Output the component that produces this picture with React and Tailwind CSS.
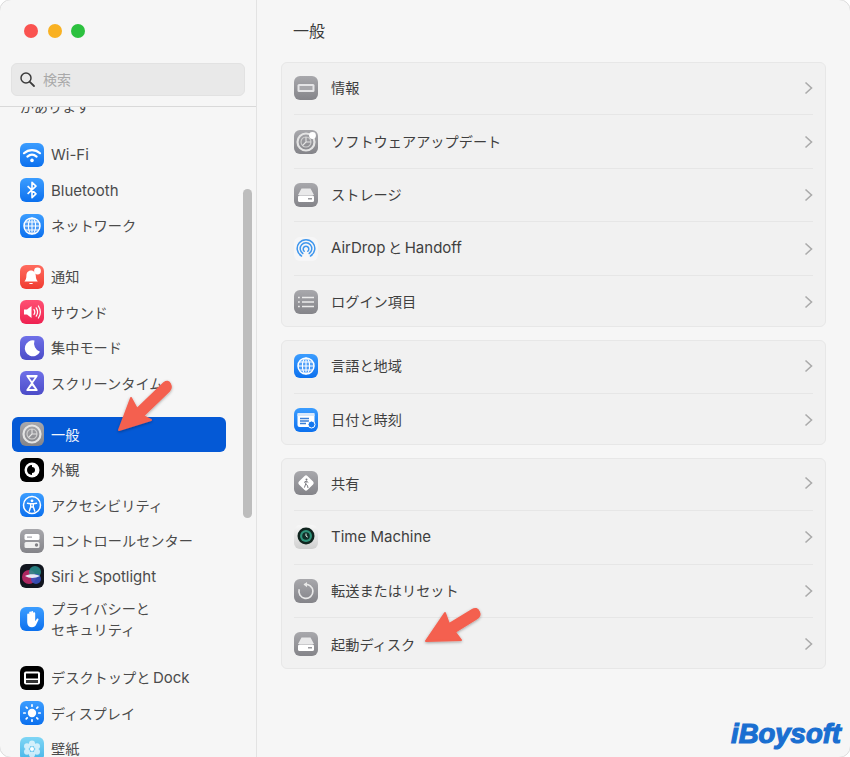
import React from 'react';

const GRAY = 'bg-linear-to-b from-[#a8a8ac] to-[#848489]';
const BLUE = 'bg-linear-to-b from-[#3b9dff] to-[#0a70ee]';

const Tile = ({ bg, children }) => (
  <div className={`w-[24px] h-[24px] shrink-0 rounded-[6px] overflow-hidden ${bg}`}>
    <svg viewBox="0 0 24 24" className="w-full h-full block">{children}</svg>
  </div>
);

const Gear = ({ badge }) => (
  <>
    <circle cx="12" cy="12" r="8.5" fill="none" stroke="#e4e4e4" strokeWidth="2.2" />
    <circle cx="12" cy="12" r="5" fill="none" stroke="#d0d0d0" strokeWidth="1.1" />
    <path d="M12 12 L12 7 M12 12 L17 12 M12 12 L8.5 15.5" stroke="#e4e4e4" strokeWidth="1.1" />
    {badge && <circle cx="18.5" cy="5.5" r="3.4" fill="#fff" />}
  </>
);

const Globe = () => (
  <g fill="none" stroke="#fff" strokeWidth="1.1">
    <circle cx="12" cy="12" r="8" fill="#ffffff30" strokeWidth="1.5" />
    <ellipse cx="12" cy="12" rx="3.6" ry="8" />
    <path d="M4 12h16M5.2 8h13.6M5.2 16h13.6M12 4v16" />
  </g>
);

const Drive = () => (
  <>
    <path d="M7.5 5.5h9l3.5 6.5H4z" fill="#e9e9ea" />
    <rect x="4" y="12.5" width="16" height="6.5" rx="1.6" fill="#fff" />
    <rect x="14" y="15" width="4" height="1.5" fill="#9a9a9e" />
  </>
);

const icons = {
  wifi: (
    <Tile bg={BLUE}>
      <g fill="none" stroke="#fff" strokeWidth="2.2" strokeLinecap="round">
        <path d="M4 10.2c4.7-4.2 11.3-4.2 16 0" />
        <path d="M7.4 13.6c2.8-2.4 6.4-2.4 9.2 0" />
      </g>
      <circle cx="12" cy="17.4" r="1.8" fill="#fff" />
    </Tile>
  ),
  bluetooth: (
    <Tile bg={BLUE}>
      <path d="M7.6 8.2l8.4 7.6-4 3.8V4.4l4 3.8-8.4 7.6" fill="none" stroke="#fff" strokeWidth="1.6" strokeLinejoin="round" />
    </Tile>
  ),
  network: <Tile bg={BLUE}><Globe /></Tile>,
  bell: (
    <Tile bg="bg-linear-to-b from-[#ff6b5e] to-[#f03a30]">
      <path d="M11 5.5c-3 0-4.6 2.3-4.6 5.2 0 3-1 4.6-2 5.8h13.4c-1-1.2-2-2.8-2-5.8 0-2.9-1.8-5.2-4.8-5.2z" fill="#fff" />
      <path d="M9 18h4c0 1.4-4 1.4-4 0z" fill="#fff" />
      <circle cx="17.5" cy="6" r="3.4" fill="#fff" />
    </Tile>
  ),
  sound: (
    <Tile bg="bg-linear-to-b from-[#ff4f73] to-[#ee1f50]">
      <path d="M4 9.5h3l4.5-3.6v12.2L7 14.5H4z" fill="#fff" />
      <g fill="none" stroke="#fff" strokeWidth="1.2" strokeLinecap="round">
        <path d="M14 9.5c1 1.5 1 3.5 0 5" />
        <path d="M16.2 7.8c1.7 2.6 1.7 5.8 0 8.4" />
        <path d="M18.4 6c2.4 3.6 2.4 8.4 0 12" />
      </g>
    </Tile>
  ),
  focus: (
    <Tile bg="bg-linear-to-b from-[#6f70e8] to-[#4c4cc8]">
      <path d="M14.5 4.5A8 8 0 1 0 20 15.8 9 9 0 0 1 14.5 4.5z" fill="#fff" />
    </Tile>
  ),
  hourglass: (
    <Tile bg="bg-linear-to-b from-[#6f70e8] to-[#4c4cc8]">
      <path d="M6.5 4h11v1.6L13 12l4.5 6.4V20h-11v-1.6L11 12 6.5 5.6z" fill="#fff" />
      <path d="M9.2 6.5h5.6L12 10.3zM9 18l3-3.400 3 3.400z" fill="#6060d8" />
    </Tile>
  ),
  general: <Tile bg={GRAY}><Gear /></Tile>,
  appearance: (
    <Tile bg="bg-black">
      <circle cx="12" cy="12" r="7.5" fill="#fff" />
      <path d="M12 7a5 5 0 0 0 0 10z" fill="#000" />
      <path d="M12 9a3 3 0 0 1 0 6z" fill="#000" />
    </Tile>
  ),
  access: (
    <Tile bg={BLUE}>
      <circle cx="12" cy="12" r="8.5" fill="none" stroke="#fff" strokeWidth="1.5" />
      <circle cx="12" cy="7.8" r="1.4" fill="#fff" />
      <path d="M7.5 10.2l3.2.6v3l-1.5 4.4M16.5 10.2l-3.2.6v3l1.5 4.4M10.7 10.8h2.6M10.7 14h2.6" fill="none" stroke="#fff" strokeWidth="1.4" strokeLinecap="round" />
    </Tile>
  ),
  control: (
    <Tile bg={GRAY}>
      <rect x="4.5" y="5" width="15" height="6" rx="1.5" fill="#fff" />
      <rect x="4.5" y="13" width="15" height="6" rx="1.5" fill="#f0f0f0" />
      <circle cx="16.5" cy="16" r="1.7" fill="#808085" />
      <rect x="7" y="7.5" width="5" height="1.2" fill="#a0a0a5" />
    </Tile>
  ),
  siri: (
    <Tile bg="bg-[#12161f]">
      <circle cx="9" cy="13" r="7" fill="#c02a68" opacity="0.9" />
      <circle cx="15" cy="8" r="6" fill="#2a8f90" opacity="0.85" />
      <circle cx="16" cy="15" r="5" fill="#3a55c8" opacity="0.85" />
      <path d="M5 12c4-2.5 10-2.5 15 0-5 2.5-11 2.5-15 0z" fill="#e8e8f4" />
    </Tile>
  ),
  privacy: (
    <Tile bg={BLUE}>
      <path d="M7.2 12V7.5a1 1 0 0 1 2 0V11V5.5a1 1 0 0 1 2 0V11V5a1 1 0 0 1 2 0v6V6.200a1 1 0 0 1 2 0v8l1.500-2.200c.8-1 2.300-.2 1.700 1l-2.200 4.500c-.8 1.700-2.200 2.800-4.200 2.800-3 0-4.800-2-4.800-5z" fill="#fff" />
    </Tile>
  ),
  dock: (
    <Tile bg="bg-black">
      <rect x="4" y="5.5" width="16" height="13" rx="2" fill="#fff" />
      <rect x="6" y="7.5" width="12" height="5" fill="#000" />
      <rect x="6" y="14" width="12" height="3" fill="#333" />
    </Tile>
  ),
  display: (
    <Tile bg={BLUE}>
      <circle cx="12" cy="12" r="4.2" fill="#fff" />
      <g stroke="#fff" strokeWidth="1.7" strokeLinecap="round">
        <path d="M12 3.8v1.400M12 18.800v1.400M3.800 12h1.400M18.800 12h1.400M6.200 6.200l1 1M16.800 16.800l1 1M6.200 17.800l1-1M16.800 7.200l1-1" />
      </g>
    </Tile>
  ),
  wallpaper: (
    <Tile bg="bg-linear-to-b from-[#7fd6f5] to-[#42b4e8]">
      <g fill="#ffffffb0">
        <circle cx="12" cy="6.5" r="3" />
        <circle cx="12" cy="17.5" r="3" />
        <circle cx="7" cy="9.3" r="3" />
        <circle cx="17" cy="9.3" r="3" />
        <circle cx="7" cy="14.7" r="3" />
        <circle cx="17" cy="14.7" r="3" />
      </g>
      <circle cx="12" cy="12" r="2" fill="#fff" />
    </Tile>
  ),
  info: (
    <Tile bg={GRAY}>
      <rect x="3.5" y="8" width="17" height="8" rx="1.5" fill="#e4e4e6" />
      <rect x="5.5" y="10" width="13" height="4" fill="#a8a8ac" />
    </Tile>
  ),
  update: <Tile bg={GRAY}><Gear badge /></Tile>,
  storage: <Tile bg={GRAY}><Drive /></Tile>,
  airdrop: (
    <Tile bg="bg-[#f6f6f7]">
      <g fill="none" stroke="#3f97ee" strokeWidth="1.5" strokeLinecap="round">
        <path d="M7.5 19a8.8 8.8 0 1 1 9 0" />
        <path d="M8.8 16.5a5.8 5.8 0 1 1 6.4 0" />
        <path d="M10.2 14.2a2.8 2.8 0 1 1 3.6 0" />
      </g>
    </Tile>
  ),
  login: (
    <Tile bg={GRAY}>
      <g stroke="#ececec" strokeWidth="1.6">
        <path d="M8 7.5h12M8 12h12M8 16.5h12" />
        <path d="M4 7.5h1.8M4 12h1.8M4 16.5h1.8" />
      </g>
    </Tile>
  ),
  language: <Tile bg={BLUE}><Globe /></Tile>,
  date: (
    <Tile bg={BLUE}>
      <rect x="3.5" y="5" width="17" height="14" rx="2" fill="#fff" />
      <rect x="3.5" y="5" width="17" height="3" fill="#d8e8fb" />
      <path d="M6 10.5h9M6 13h9M6 15.5h6" stroke="#3a7fd8" strokeWidth="1.3" />
      <circle cx="17.5" cy="16.5" r="3.5" fill="#1577ee" stroke="#fff" strokeWidth="1" />
    </Tile>
  ),
  share: (
    <Tile bg={GRAY}>
      <rect x="6" y="6" width="12" height="12" rx="2" fill="#fff" transform="rotate(45 12 12)" />
      <circle cx="12.5" cy="8.5" r="1" fill="#7b7b80" />
      <path d="M12.3 10l-.6 3 1.800 1.500.5 2.500M11.700 13l-1.300 3.600M10 11.500l2.300-1.500 2 1.500" fill="none" stroke="#7b7b80" strokeWidth="1" />
    </Tile>
  ),
  time: (
    <Tile bg="bg-linear-to-b from-[#f7f7f7] to-[#cfcfcf]">
      <circle cx="12" cy="11" r="8.5" fill="#10251f" />
      <circle cx="12" cy="11" r="6" fill="#2e9279" />
      <circle cx="12" cy="11" r="3.8" fill="#0f2f28" />
      <path d="M12 8.5V11l1.8 1.2" fill="none" stroke="#e6f2ee" strokeWidth="1" />
    </Tile>
  ),
  reset: (
    <Tile bg={GRAY}>
      <path d="M10.5 5.5a7 7 0 1 1-5.3 4.8" fill="none" stroke="#e8e8e8" strokeWidth="1.7" />
      <path d="M13 3l-3.5 2.600L13 8.200z" fill="#e8e8e8" />
    </Tile>
  ),
};

const groups = [
  [
    ['Wi-Fi', 'wifi'],
    ['Bluetooth', 'bluetooth'],
    ['ネットワーク', 'network'],
  ],
  [
    ['通知', 'bell'],
    ['サウンド', 'sound'],
    ['集中モード', 'focus'],
    ['スクリーンタイム', 'hourglass'],
  ],
  [
    ['一般', 'general'],
    ['外観', 'appearance'],
    ['アクセシビリティ', 'access'],
    ['コントロールセンター', 'control'],
    ['Siri\u2009と\u2009Spotlight', 'siri'],
    ['プライバシーと\nセキュリティ', 'privacy'],
  ],
  [
    ['デスクトップと\u2009Dock', 'dock'],
    ['ディスプレイ', 'display'],
    ['壁紙', 'wallpaper'],
  ],
];

const panels = [
  { h: 'h-[265px]', rows: [['情報', 'info'], ['ソフトウェアアップデート', 'update'], ['ストレージ', 'storage'], ['AirDrop\u2009と\u2009Handoff', 'airdrop'], ['ログイン項目', 'login']] },
  { h: 'h-[105px]', rows: [['言語と地域', 'language'], ['日付と時刻', 'date']] },
  { h: 'h-[211px]', rows: [['共有', 'share'], ['Time Machine', 'time'], ['転送またはリセット', 'reset'], ['起動ディスク', 'storage']] },
];

// latin runs sit a little larger than the kana around them
const Label = ({ text }) =>
  text.split(/([A-Za-z-]+(?: [A-Za-z]+)*)/).map((part, i) =>
    i % 2 ? <span key={i} className="text-[15px]">{part}</span> : part
  );

const SidebarRow = ({ label, icon }) => {
  const active = label === '一般';
  const tall = label.includes('\n');
  return (
    <div
      className={`flex items-center gap-[7px] pl-[8px] rounded-[6px] ${tall ? 'h-[50.5px]' : 'h-[35.5px]'} ${active ? 'bg-[#0459d6] text-[#f2f6fd]' : 'text-[#4b4b4b]'}`}
    >
      {icons[icon]}
      <span className="text-[14.2px] leading-[21px] whitespace-pre-line"><Label text={label} /></span>
    </div>
  );
};

const PanelRow = ({ label, icon, first }) => (
  <div className={`mx-[12px] h-[53.5px] shrink-0 flex items-center gap-[13px] ${first ? '' : 'border-t border-[#e6e6e6]'}`}>
    {icons[icon]}
    <span className="flex-1 text-[14.2px] text-[#3f3f3f]"><Label text={label} /></span>
    <svg width="9" height="14" viewBox="0 0 9 14" className="shrink-0">
      <path d="M1.5 1.5L7.5 7l-6 5.5" fill="none" stroke="#ababab" strokeWidth="1.6" />
    </svg>
  </div>
);

const App = () => {
  return (
    <div className="relative w-[850px] h-[757px] bg-white overflow-hidden font-['Inter','Noto_Sans_CJK_JP',sans-serif]">
      <div className="flex h-[759px] bg-[#f6f6f6] rounded-[12px] border border-[#dcdcdc] -m-px overflow-hidden">
        {/* Sidebar */}
        <aside className="w-[257px] shrink-0 border-r border-[#e3e3e3] flex flex-col">
          <div className="flex items-center gap-[9.5px] pl-[24px] pt-[24px]">
            <span className="w-[14px] h-[14px] rounded-full bg-[#fa5350]" />
            <span className="w-[14px] h-[14px] rounded-full bg-[#f9b122]" />
            <span className="w-[14px] h-[14px] rounded-full bg-[#2cc13f]" />
          </div>
          <div className="mx-[11px] mt-[25px] h-[33px] rounded-[6px] bg-[#e9e9e9] border border-[#e2e2e2] flex items-center gap-[7px] pl-[7px]">
            <svg width="17" height="17" viewBox="0 0 17 17" className="shrink-0">
              <circle cx="7" cy="7" r="5" fill="none" stroke="#3c3c3c" strokeWidth="1.5" />
              <path d="M10.8 10.800L15 15" stroke="#3c3c3c" strokeWidth="1.8" strokeLinecap="round" />
            </svg>
            <span className="text-[14px] text-[#a9a9a9]">検索</span>
          </div>
          <div className="mt-[10px] border-t border-[#d9d9d9] flex-1 overflow-hidden">
            <div className="relative h-[16px] -mt-[8px] pl-[20px] text-[14px] leading-[16px] text-[#4b4b4b] flex">
              <span>があります</span>
              <span className="absolute left-[200px] -top-[8px] w-[16px] h-[16px] rounded-full bg-[#e0443a]" />
            </div>
            <div className="pl-[12px] pr-[30px] mt-[22px] flex flex-col gap-[15.5px]">
              {groups.map((group, i) => (
                <div key={i} className="flex flex-col">
                  {group.map(([label, icon]) => (
                    <SidebarRow key={label} label={label} icon={icon} />
                  ))}
                </div>
              ))}
            </div>
          </div>
        </aside>

        {/* Main */}
        <main className="flex-1 px-[24px]">
          <h1 className="h-[62px] pt-[20px] pl-[12px] text-[16px] leading-[22px] font-normal text-[#3a3a3a]">一般</h1>
          <div className="flex flex-col gap-[13px]">
            {panels.map((panel, i) => (
              <section key={i} className={`${panel.h} flex flex-col justify-center overflow-hidden rounded-[6px] bg-[#f1f1f1] border border-[#e7e7e7]`}>
                {panel.rows.map(([label, icon], j) => (
                  <PanelRow key={label} label={label} icon={icon} first={j === 0} />
                ))}
              </section>
            ))}
          </div>
        </main>
      </div>

      {/* Scrollbar */}
      <div className="absolute left-[243px] top-[189px] w-[9px] h-[329px] rounded-full bg-[#bdbdbd]" />

      {/* Annotation arrows */}
      <svg className="absolute inset-0 pointer-events-none" width="850" height="757" viewBox="0 0 850 757">
        <defs>
          <filter id="arrowShadow" x="-30%" y="-30%" width="160%" height="160%">
            <feDropShadow dx="0" dy="1" stdDeviation="1.5" floodColor="#000" floodOpacity="0.35" />
          </filter>
        </defs>
        <g fill="#f4604f" stroke="#f4604f" strokeWidth="2" strokeLinejoin="round" filter="url(#arrowShadow)">
          <path d="M119 430L131 398L137 409L164 383Q168 380 170 384Q172 388 169 391L143 416L151 420z" />
          <path d="M426 641L445 613L449 624L472 610Q477 607 479 612Q481 616 476 619L455 632L461 640z" />
        </g>
      </svg>

      {/* Watermark */}
      <span className="absolute left-[731px] top-[717px] text-[27.5px] leading-[34px] font-bold italic text-[#1a6fd1] font-['Liberation_Sans',sans-serif] [-webkit-text-stroke:1.2px_#1a6fd1]">
        iBoysoft
      </span>
    </div>
  );
};

export default App;
